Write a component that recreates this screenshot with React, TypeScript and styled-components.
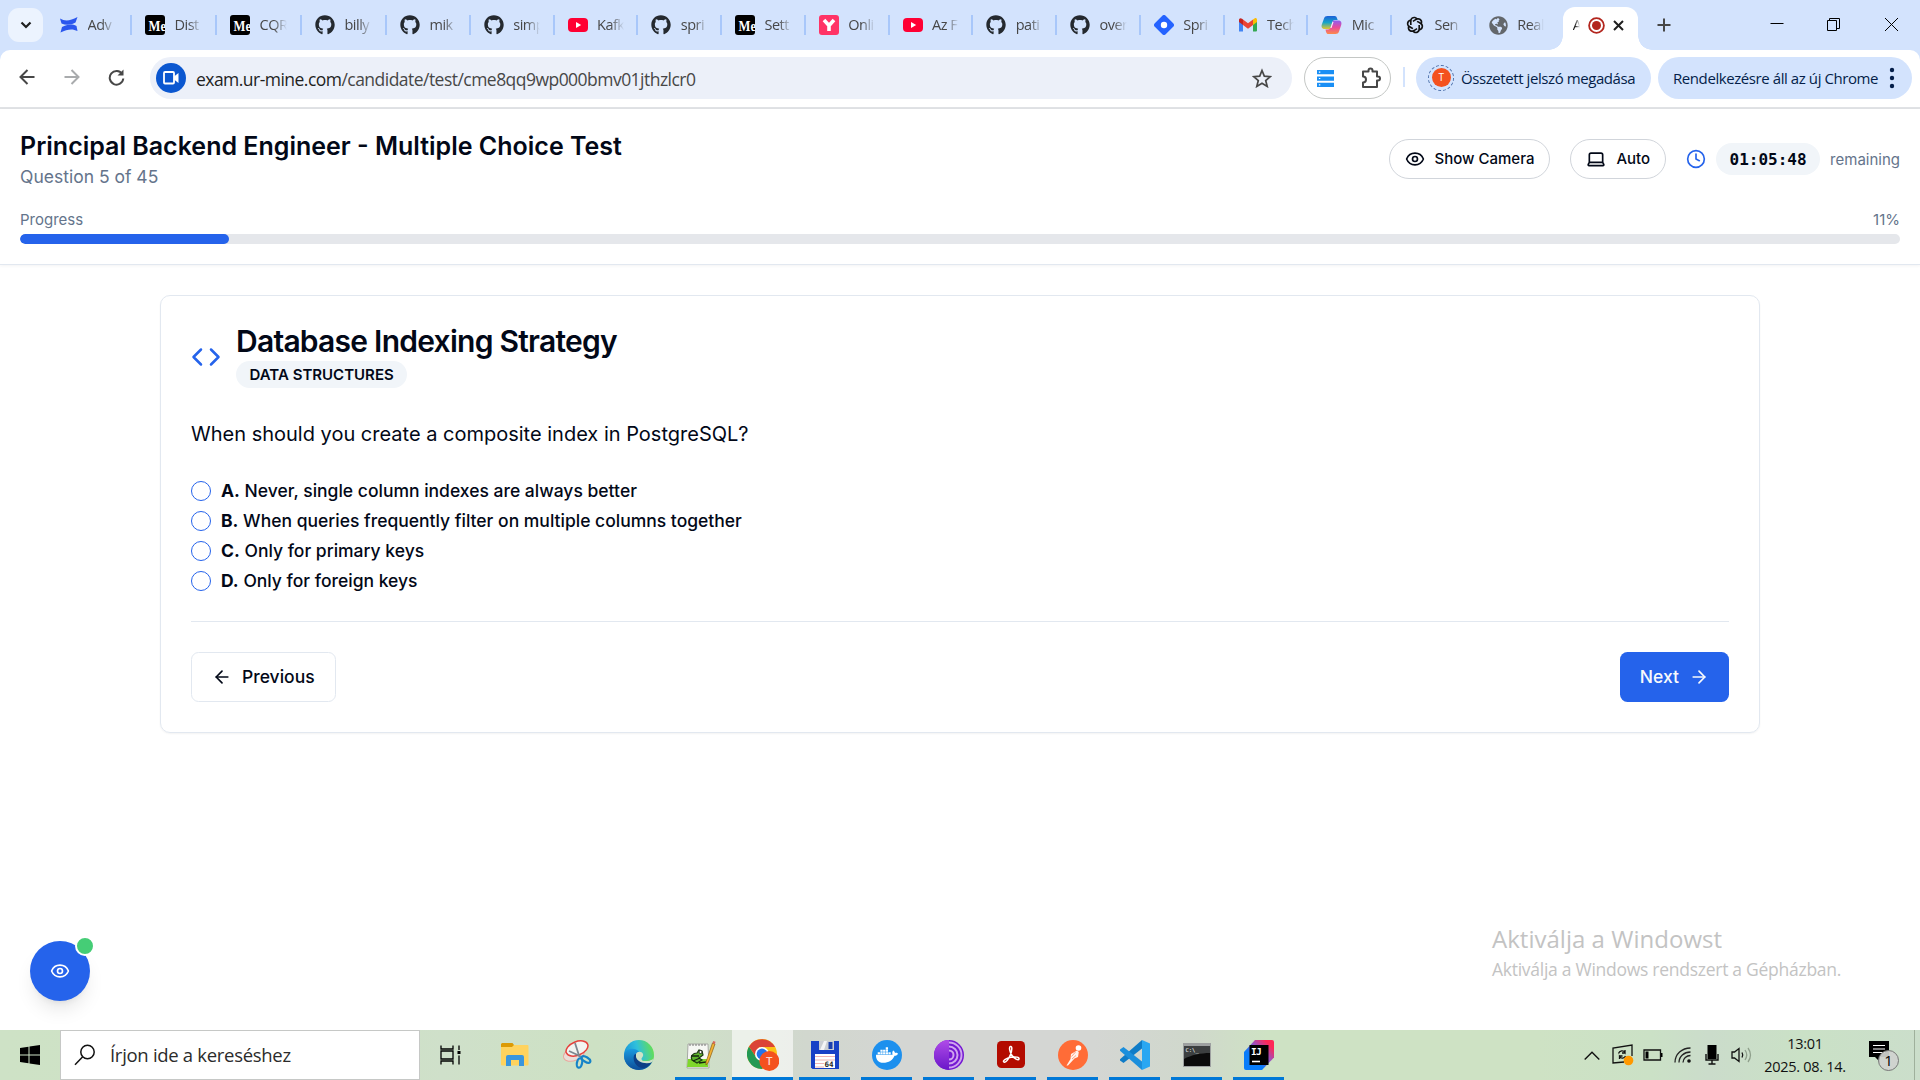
import React from "react";
import styled, { createGlobalStyle, css } from "styled-components";
import { ArrowLeft, ArrowRight, Clock, Code, Eye } from "lucide-react";
import { FaDocker, FaGithub, FaGlobeAmericas } from "react-icons/fa";
import { RiOpenaiLine } from "react-icons/ri";

const Global = createGlobalStyle`
  *, *::before, *::after { box-sizing: border-box; }
  body { margin: 0; background: #fff; overflow: hidden; }
  svg { display: block; flex: none; }
`;

const ui = css`
  font-family: "Open Sans", "Noto Sans", sans-serif;
`;

const Screen = styled.div`
  width: 1920px;
  height: 1080px;
  display: flex;
  flex-direction: column;
  overflow: hidden;
  background: #fff;
  font-family: Inter, sans-serif;
  color: #020817;
`;

/* ---------- Browser ---------- */

const Browser = styled.div`
  ${ui}
  flex: none;
  background: #d3e3fd;
`;

const TabStrip = styled.div`
  display: flex;
  height: 50px;
  align-items: center;
  padding-left: 8px;
`;

const TabSearch = styled.div`
  width: 35px;
  height: 34px;
  margin-right: 4px;
  border-radius: 11px;
  background: #ecf3fe;
  display: flex;
  align-items: center;
  justify-content: center;
`;

const TabItem = styled.div<{ $w: number; $last?: boolean }>`
  width: ${(p) => p.$w}px;
  height: 20px;
  flex: none;
  display: flex;
  align-items: center;
  padding-left: 13px;
  gap: 9.5px;
  border-right: ${(p) => (p.$last ? "none" : "2px solid #a8c7fa")};
`;

const TabText = styled.span`
  width: 27px;
  overflow: hidden;
  white-space: nowrap;
  font-size: 14.5px;
  line-height: 20px;
  letter-spacing: -0.5px;
  color: #474747;
  mask-image: linear-gradient(90deg, #000 50%, transparent 100%);
`;

const ActiveTab = styled.div`
  position: relative;
  width: 75px;
  height: 43px;
  align-self: flex-end;
  border-radius: 12px 12px 0 0;
  background: #fff;
  display: flex;
  align-items: center;
  justify-content: space-between;
  padding: 0 14px 7px 10px;
  &::before,
  &::after {
    content: "";
    position: absolute;
    bottom: 0;
    width: 14px;
    height: 14px;
  }
  &::before {
    left: -14px;
    background: radial-gradient(circle at 0 0, transparent 13.5px, #fff 14px);
  }
  &::after {
    right: -14px;
    background: radial-gradient(circle at 100% 0, transparent 13.5px, #fff 14px);
  }
`;

const ActiveText = styled.span`
  width: 7px;
  overflow: hidden;
  font-size: 14.5px;
  line-height: 20px;
  color: #1f1f1f;
  mask-image: linear-gradient(90deg, #000 30%, transparent 100%);
`;

const NewTab = styled.div`
  width: 52px;
  display: flex;
  justify-content: center;
`;

const WindowButtons = styled.div`
  display: flex;
  margin-left: auto;
  height: 50px;
  padding-right: 1px;
  svg {
    margin: 14px 18.5px 0;
  }
`;

const Toolbar = styled.div`
  height: 59px;
  display: flex;
  align-items: center;
  padding: 0 8px 3px 4px;
  border-bottom: 2px solid #e0e2e5;
  border-radius: 10px 10px 0 0;
  background: #fff;
`;

const NavButton = styled.div`
  width: 45px;
  display: flex;
  justify-content: center;
`;

const Omnibox = styled.div`
  width: 1142px;
  height: 42px;
  margin: 2px 12px 0 11px;
  border-radius: 21px;
  background: #ecf0f9;
  display: flex;
  align-items: center;
  padding: 0 20px 0 6px;
`;

const CameraDot = styled.div`
  width: 30px;
  height: 30px;
  border-radius: 50%;
  background: #0b57d0;
  display: flex;
  align-items: center;
  justify-content: center;
  margin-right: 10px;
`;

const Address = styled.div`
  flex: 1;
  padding-top: 2px;
  font-size: 17.5px;
  line-height: 24px;
  letter-spacing: -0.53px;
  color: #474747;
  b {
    font-weight: 400;
    color: #1f1f1f;
  }
`;

const Extensions = styled.div`
  width: 87px;
  height: 42px;
  margin-top: 2px;
  border: 1px solid #c4c7c5;
  border-radius: 21px;
  display: flex;
  align-items: center;
  justify-content: space-between;
  padding: 0 8px 0 12px;
`;

const ToolbarRule = styled.div`
  width: 2px;
  height: 20px;
  margin: 0 11px 0 12px;
  background: #d3e3fd;
`;

const Chip = styled.div<{ $w: number }>`
  width: ${(p) => p.$w}px;
  height: 42px;
  margin: 1px 7px 0 0;
  border-radius: 21px;
  background: #d3e3fd;
  color: #041e49;
  display: flex;
  align-items: center;
  font-size: 15px;
  line-height: 20px;
  letter-spacing: -0.42px;
  white-space: nowrap;
  padding-left: ${(p) => (p.$w > 240 ? 15 : 12)}px;
  gap: 7px;
  &:last-child {
    margin-right: 0;
  }
  svg:last-child {
    margin-left: auto;
    margin-right: 17px;
  }
`;

const Avatar = styled.div`
  width: 26px;
  height: 26px;
  border-radius: 50%;
  border: 1.5px dashed #4a6ea9;
  display: flex;
  align-items: center;
  justify-content: center;
  span {
    width: 19px;
    height: 19px;
    border-radius: 50%;
    background: #f4511e;
    color: #fff;
    font-size: 10px;
    line-height: 19px;
    text-align: center;
  }
`;

/* ---------- Exam page ---------- */

const Page = styled.div`
  flex: 1;
  min-height: 0;
  position: relative;
`;

const ExamHeader = styled.header`
  padding: 20px;
  border-bottom: 1px solid #e2e8f0;
  box-shadow: 0 1px 3px rgba(15, 23, 42, 0.05);
`;

const HeaderRow = styled.div`
  display: flex;
  justify-content: space-between;
  align-items: center;
  height: 60px;
  margin-bottom: 20px;
`;

const ExamTitle = styled.h1`
  margin: 0;
  font-size: 25px;
  line-height: 35px;
  font-weight: 600;
`;

const Muted = styled.div<{ $size?: number }>`
  font-size: ${(p) => p.$size ?? 15}px;
  line-height: ${(p) => (p.$size ? 25 : 21)}px;
  color: #64748b;
`;

const HeaderTools = styled.div`
  display: flex;
  align-items: center;
  gap: 20px;
`;

const PillButton = styled.button`
  height: 40px;
  padding: 0 15px;
  display: flex;
  align-items: center;
  gap: 10px;
  border: 1px solid #d1d5db;
  border-radius: 20px;
  background: #fff;
  font: 500 15px/20px Inter, sans-serif;
  color: #020817;
`;

const Timer = styled.div`
  display: flex;
  align-items: center;
  gap: 10px;
`;

const TimeBadge = styled.div`
  width: 104px;
  height: 32px;
  border-radius: 16px;
  background: #f1f5f9;
  text-align: center;
  font: 700 16px/33px "DejaVu Sans Mono", monospace;
`;

const ProgressLabels = styled.div`
  display: flex;
  justify-content: space-between;
  margin-bottom: 4px;
`;

const Track = styled.div`
  height: 10px;
  border-radius: 5px;
  background: #e5e7eb;
  overflow: hidden;
`;

const Fill = styled.div`
  width: 209px;
  height: 10px;
  border-radius: 5px;
  background: #2563eb;
`;

const Card = styled.main`
  width: 1600px;
  margin: 30px auto 0;
  padding: 30px;
  border: 1px solid #e2e8f0;
  border-radius: 10px;
  box-shadow: 0 1px 2px rgba(0, 0, 0, 0.05);
`;

const CardHead = styled.div`
  display: flex;
  align-items: center;
  gap: 15px;
`;

const CardTitle = styled.h2`
  margin: 0 0 5px;
  font-size: 30px;
  line-height: 30px;
  font-weight: 600;
  letter-spacing: -0.75px;
`;

const Category = styled.div`
  display: inline-block;
  height: 27px;
  padding: 0 13.5px;
  border-radius: 14px;
  background: #f1f5f9;
  font-size: 15px;
  line-height: 27px;
  font-weight: 600;
  vertical-align: top;
`;

const Question = styled.p`
  margin: 30px 0;
  font-size: 20px;
  line-height: 32.5px;
`;

const Options = styled.div`
  display: grid;
  gap: 10px;
`;

const Option = styled.label`
  display: flex;
  align-items: center;
  gap: 10px;
  height: 20px;
  font-size: 17.5px;
  line-height: 20px;
  font-weight: 500;
  b {
    font-weight: 700;
  }
`;

const Radio = styled.i`
  width: 20px;
  height: 20px;
  border: 1px solid #2563eb;
  border-radius: 50%;
`;

const CardFoot = styled.div`
  display: flex;
  justify-content: space-between;
  margin-top: 30px;
  padding-top: 30px;
  border-top: 1px solid #e2e8f0;
`;

const ActionButton = styled.button<{ $primary?: boolean }>`
  height: 50px;
  padding: 0 20px;
  display: flex;
  align-items: center;
  gap: 10px;
  border-radius: 7.5px;
  border: ${(p) => (p.$primary ? "none" : "1px solid #e2e8f0")};
  background: ${(p) => (p.$primary ? "#2563eb" : "#fff")};
  color: ${(p) => (p.$primary ? "#f8fafc" : "#020817")};
  font: 500 17.5px/25px Inter, sans-serif;
`;

const CameraFab = styled.div`
  position: absolute;
  left: 30px;
  bottom: 29px;
  width: 60px;
  height: 60px;
  border-radius: 50%;
  background: #2563eb;
  color: #fff;
  display: flex;
  align-items: center;
  justify-content: center;
  box-shadow: 0 12px 19px -4px rgba(0, 0, 0, 0.1), 0 5px 7px -5px rgba(0, 0, 0, 0.1);
  &::after {
    content: "";
    position: absolute;
    top: -5px;
    right: -5px;
    width: 20px;
    height: 20px;
    border-radius: 50%;
    border: 2px solid #fff;
    background: #45cd76;
  }
`;

const Watermark = styled.div`
  ${ui}
  position: absolute;
  left: 1492px;
  bottom: 47px;
  color: #c3c3c3;
  white-space: nowrap;
  div:first-child {
    font-size: 24px;
    line-height: 32px;
    letter-spacing: 0.02px;
  }
  div:last-child {
    font-size: 17.5px;
    line-height: 28px;
    letter-spacing: -0.27px;
  }
`;

/* ---------- Taskbar ---------- */

const Taskbar = styled.div`
  ${ui}
  height: 50px;
  flex: none;
  display: flex;
  color: #111;
  background: linear-gradient(
    90deg,
    #cee2c6 0%, #cde2c4 17%, #cfe0ca 23%, #cde1c4 31%, #cfe0c8 36%, #d1d7ce 42%,
    #d4d6d3 47%, #d4d6d3 57%, #d0d8cc 62%, #cee2c4 66%, #cee2c4 80%, #cbe1c6 86%, #cbdccb 89%, #cae1c6 94%, #cbdecb 100%
  );
`;

const Start = styled.div`
  width: 60px;
  display: flex;
  align-items: center;
  justify-content: center;
`;

const SearchBox = styled.div`
  width: 360px;
  height: 50px;
  margin-right: 1px;
  border: 1px solid #c6c8c6;
  background: #fff;
  display: flex;
  align-items: center;
  padding: 0 0 1px 13px;
  gap: 14px;
  font-size: 18.5px;
  letter-spacing: -0.3px;
  color: #2b2b2b;
`;

const TaskItem = styled.div<{ $open?: boolean; $active?: boolean }>`
  width: 62px;
  height: 50px;
  display: flex;
  align-items: center;
  justify-content: center;
  border-left: 1px solid transparent;
  background: ${(p) => (p.$active ? "rgba(255,255,255,.6)" : "transparent")};
  background-clip: padding-box;
  box-shadow: ${(p) => (p.$active ? "inset 0 -3px #0078d7" : "none")};
  ${(p) =>
    p.$open &&
    css`
      background: linear-gradient(#0078d7, #0078d7) center bottom / 51px 3px no-repeat;
    `}
`;

const Tray = styled.div`
  margin-left: auto;
  display: flex;
  align-items: center;
`;

const TrayCell = styled.div<{ $w: number }>`
  width: ${(p) => p.$w}px;
  display: flex;
  justify-content: center;
`;

const ClockText = styled.div`
  width: 96px;
  text-align: center;
  font-size: 14.5px;
  line-height: 23px;
  letter-spacing: -0.3px;
  white-space: nowrap;
`;

const ShowDesktop = styled.div`
  width: 6px;
  height: 50px;
  border-left: 1px solid #9fb09c;
`;

/* ---------- Drawn icons ---------- */

const ConfluenceIcon = () => (
  <svg width="18" height="18" viewBox="0 0 18 18">
    <path d="M0 2.500c5 3 10 2.500 17.500-1.500l-2 5.500C11 9 6 9.500 1.500 7.500z" fill="#2b57ee" />
    <path d="M17.500 15c-5-2.500-10-2-17 1.500l1.500-5.500c5-2.500 9.500-3.500 14.500-1z" fill="#2b57ee" />
  </svg>
);

const MediumIcon = () => (
  <svg width="20" height="20" viewBox="0 0 20 20">
    <rect width="20" height="20" rx="3" />
    <text x="3.500" y="15.500" fontFamily="Liberation Serif, serif" fontWeight="700" fontSize="15.500" fill="#fff" textLength="17.500" lengthAdjust="spacingAndGlyphs">Me</text>
  </svg>
);

const YoutubeIcon = () => (
  <svg width="20" height="20" viewBox="0 0 20 20">
    <rect y="3" width="20" height="14" rx="4" fill="#ff0033" />
    <path d="M8 7v6l5.200-3z" fill="#fff" />
  </svg>
);

const YIcon = () => (
  <svg width="20" height="20" viewBox="0 0 20 20">
    <rect width="20" height="20" rx="3" fill="#ff3366" />
    <path d="M5 5 10 10.500l5-5.500M10 10v6" fill="none" stroke="#fff" strokeWidth="3.600" />
  </svg>
);

const DiamondIcon = () => (
  <svg width="20" height="20" viewBox="0 0 20 20">
    <path d="M8.300.8a2.400 2.400 0 0 1 3.400 0l7.500 7.500a2.400 2.400 0 0 1 0 3.400l-7.500 7.500a2.400 2.400 0 0 1-3.400 0L.8 11.700a2.400 2.400 0 0 1 0-3.400z" fill="#2563ff" />
    <circle cx="10" cy="10" r="3.200" fill="#fff" />
  </svg>
);

const GmailIcon = () => (
  <svg width="20" height="20" viewBox="0 0 20 20">
    <path d="M1 6v10.500h4V9z" fill="#4285f4" />
    <path d="M15 9v7.500h3a1 1 0 0 0 1-1V6z" fill="#34a853" />
    <path d="m15 4.500 1.500-1C18 2.500 19 3.500 19 5v2l-4 3z" fill="#fbbc04" />
    <path d="M5 4.500 10 8.300l5-3.800V10l-5 3.800L5 10z" fill="#ea4335" />
    <path d="M1 5c0-1.500 1.500-2.500 3-1.200l1 .7V10L1 7z" fill="#c5221f" />
  </svg>
);

const CopilotIcon = () => (
  <svg width="21" height="20" viewBox="0 0 21 20">
    <defs>
      <linearGradient id="cpa" x2="0" y2="1"><stop stopColor="#1b5fd9" /><stop offset=".5" stopColor="#15a4c9" /><stop offset="1" stopColor="#e3c52d" /></linearGradient>
      <linearGradient id="cpb" x2="0" y2="1"><stop stopColor="#8d5ff0" /><stop offset=".5" stopColor="#e84a9c" /><stop offset="1" stopColor="#fd8b4a" /></linearGradient>
    </defs>
    <path d="M6.500 1h7c1.500 0 2 .8 2.500 2.300L16.700 5H14c-1.600 0-2.300 1-2.800 2.500L9 14H4C1 14 0 12 .8 9.500L3 3.500C3.700 1.700 4.700 1 6.500 1z" fill="url(#cpa)" />
    <path d="M14.500 19h-7C6 19 5.500 18.200 5 16.700L4.500 14.500H7c1.600 0 2.300-1 2.800-2.500L12 5.500h5c3 0 4 2 3.200 4.500l-2.200 6.500c-.7 1.800-1.700 2.500-3.500 2.500z" fill="url(#cpb)" />
    <path d="m9.500 13 2-6h1l-2 6z" fill="#fff" />
  </svg>
);

const Laptop = () => (
  <svg width="20" height="20" viewBox="0 0 24 24" fill="none" stroke="currentColor" strokeWidth="2" strokeLinecap="round" strokeLinejoin="round">
    <path d="M20 16V7a2 2 0 0 0-2-2H6a2 2 0 0 0-2 2v9m16 0H4m16 0 1.280 2.550a1 1 0 0 1-.9 1.450H3.620a1 1 0 0 1-.9-1.450L4 16" />
  </svg>
);

const Explorer = () => (
  <svg width="28" height="24" viewBox="0 0 28 24">
    <path d="M1 0h10.500l1.500 2v4H0V1z" fill="#dc9a05" />
    <path d="M0 4h11l2-2h13.500a1 1 0 0 1 1 1v18.500a1 1 0 0 1-1 1H1a1 1 0 0 1-1-1z" fill="#ffd35e" />
    <path d="M5 23V14a2 2 0 0 1 2-2h14a2 2 0 0 1 2 2v9h-5v-6h-8v6z" fill="#3a96dd" />
  </svg>
);

const Snip = () => (
  <svg width="30" height="30" viewBox="0 0 30 30" fill="none">
    <ellipse cx="12" cy="14" rx="11" ry="6.500" transform="rotate(-22 12 14)" fill="#e9ded9" stroke="#eba79d" />
    <ellipse cx="15" cy="8.500" rx="11.500" ry="6.800" transform="rotate(-22 15 8.500)" fill="#f2f4f1" stroke="#e5413c" strokeWidth="1.500" />
    <path d="m13 3 4.500 14M7 11l13 6" stroke="#7d8790" strokeWidth="1.800" />
    <ellipse cx="17.500" cy="23" rx="2.600" ry="4.800" transform="rotate(12 17.500 23)" stroke="#1583c8" strokeWidth="2.200" />
    <ellipse cx="24" cy="19.500" rx="2.400" ry="4.800" transform="rotate(-58 24 19.500)" stroke="#1583c8" strokeWidth="2.200" />
  </svg>
);

const Edge = () => (
  <svg width="30" height="30" viewBox="0 0 30 30">
    <defs>
      <linearGradient id="e1" x1="0" y1=".6" x2="1" y2=".3"><stop stopColor="#1590d8" /><stop offset=".5" stopColor="#2fc0dc" /><stop offset="1" stopColor="#66e04e" /></linearGradient>
      <linearGradient id="e2" x2="0" y2="1"><stop stopColor="#1a9be0" /><stop offset="1" stopColor="#0c4c98" /></linearGradient>
    </defs>
    <circle cx="15" cy="15" r="15" fill="url(#e1)" />
    <path d="M0 16C0 9 8 7.500 12 9.500c4 2 5 5 3.500 7-2 2.500 2 5.500 7 4.500 3-.5 5.500-2 6 0C26 27 20 30 15 30 7 30 0 24 0 16z" fill="url(#e2)" />
    <path d="M10 15.500C8 22 14 29 20 28c4-1 7-4 8-6.500-6 3-13 1.500-14.500-3-.8-2.500 0-4 .8-5-2 0-3.600.5-4.300 2z" fill="#0d3f86" />
    <path d="M12 14c1-3 6-3 7 0 .8 2.500-1.500 3.500-1.500 5 0 2.500 5 3 11.800 0l-.8 3C22 25 13 22 12 17z" fill="#cfe2c6" />
    <path d="M18 20c2 1.500 8 1 10.500-1 1.200-2 1.500-3 1.500-4-2 4-6 5.500-10 5.200z" fill="#62dc5c" />
  </svg>
);

const NotepadPP = () => (
  <svg width="30" height="30" viewBox="0 0 30 30">
    <path d="M2 4h20l1 24H1z" fill="#f6f7f4" stroke="#a7a9a4" />
    <path d="M2 19h20v8H1z" fill="#7fd72c" />
    <path d="M4 4v2M7 4v2M10 4v2M13 4v2M16 4v2M19 4v2" stroke="#777" />
    <path d="M6 20c-2-4 1-7 5-7l2-3 3 1 1 4-4 3 3 2-5 3z" fill="#5eb52c" stroke="#1d3b12" strokeWidth="1.200" />
    <circle cx="14.500" cy="12" r="1.600" fill="#fff" stroke="#222" />
    <path d="M5 16h8M7 21l7-3M13 23l7-1" stroke="#16260f" strokeWidth="1.300" />
    <path d="m20 22 6.500-19 2.500 1-6.500 18-2.500 3z" fill="#f3b334" stroke="#8b5c16" strokeWidth=".7" />
    <path d="m26.500 3 .7-2 2.300.8-.6 2.200z" fill="#d9665c" />
  </svg>
);

const Chrome = () => (
  <svg width="32" height="32" viewBox="0 0 32 32">
    <circle cx="15" cy="15" r="15" fill="#fbc116" />
    <path d="M2 7.500A15 15 0 0 0 15 30l6.500-11.200L9 18z" fill="#229954" />
    <path d="M2 7.500 8.500 17 12 8h16A15 15 0 0 0 2 7.500z" fill="#db4437" />
    <circle cx="15" cy="15" r="7" fill="#fff" />
    <circle cx="15" cy="15" r="5.400" fill="#2374e8" />
    <circle cx="22.300" cy="22" r="10" fill="#f4511e" />
    <text x="22.300" y="26" textAnchor="middle" fontFamily="Open Sans, sans-serif" fontWeight="600" fontSize="11.500" fill="#ffd8c8">T</text>
  </svg>
);

const Floppy = () => (
  <svg width="28" height="28" viewBox="0 0 28 28">
    <path d="M0 0h28v28H1.500L0 26.500z" fill="#1741c6" />
    <path d="M8 0h15v9H8z" fill="#c9cdd3" />
    <path d="m13 0 3 0-3 9h-4z" fill="#f3f4f6" />
    <path d="M17.500 1h4v7h-4z" fill="#1b3fae" />
    <path d="M4 13h20v14H4z" fill="#fff" />
    <path d="M4 15.500h20M4 19h20M4 22.500h9M4 26h9" stroke="#f0b3b3" strokeWidth="1.200" />
    <text x="13.500" y="26" fontFamily="DejaVu Sans Mono, monospace" fontWeight="700" fontSize="7.500" fill="#222">64</text>
  </svg>
);

const Docker = () => (
  <svg width="30" height="30" viewBox="0 0 30 30">
    <circle cx="15" cy="15" r="15" fill="#1d90ee" />
    <FaDocker x="4" y="4" width="22" height="22" size={22} color="#fff" />
  </svg>
);

const Tor = () => (
  <svg width="30" height="30" viewBox="0 0 30 30">
    <defs>
      <linearGradient id="tor" x2="0" y2="1"><stop stopColor="#b04be8" /><stop offset="1" stopColor="#6a17c9" /></linearGradient>
    </defs>
    <circle cx="15" cy="15" r="15" fill="#7418d2" />
    <path d="M15 2.500a12.500 12.500 0 0 1 0 25M15 6.500a8.500 8.500 0 0 1 0 17M15 10.500a4.500 4.500 0 0 1 0 9" fill="none" stroke="#cfa4ef" strokeWidth="2" />
    <path d="M15 0a15 15 0 0 0 0 30z" fill="url(#tor)" />
  </svg>
);

const Acrobat = () => (
  <svg width="28" height="28" viewBox="0 0 28 28">
    <rect width="28" height="27" rx="4.500" fill="#b30b00" />
    <path d="M13.500 5.500c2-.5 1.500 4 0 8-1.500 4-4.500 8.500-6.500 7.500s2-4 7-4.800c5-.8 8.500 0 8 1.800s-5-.5-7-3.500-3.500-8.500-1.500-9z" fill="none" stroke="#fff" strokeWidth="1.500" />
  </svg>
);

const Postman = () => (
  <svg width="30" height="30" viewBox="0 0 30 30">
    <circle cx="15" cy="15" r="15" fill="#ff6c37" />
    <circle cx="20.500" cy="8" r="2.800" fill="#fff" />
    <path d="m19 10.500 1.800 1.500-.8 5-3.500 1.500-6.500 7h-1.500l4-6.500.5-5z" fill="#fff3ec" />
    <path d="m17.500 12-4 4.500m4.500-1-4 3.500" stroke="#ff8d63" strokeWidth=".8" />
  </svg>
);

const VSCode = () => (
  <svg width="30" height="30" viewBox="0 0 30 30">
    <path d="M22 0 30 3.500v23L22 30z" fill="#2aa7f2" />
    <path d="M22 0v8.500L3.500 23 0 20.500v-1.200z" fill="#0f7cc7" />
    <path d="M22 30v-8.500L3.500 7 0 9.500v1.200z" fill="#1b8fdc" />
  </svg>
);

const Cmd = () => (
  <svg width="28" height="24" viewBox="0 0 28 24">
    <rect width="28" height="24" fill="#9da0a0" />
    <rect x="1" y="3" width="26" height="20" fill="#0b0b0b" />
    <path d="M1 3h26v7C18 10 8 12 1 16z" fill="#3c3f40" />
    <text x="2.500" y="9" fontFamily="DejaVu Sans Mono, monospace" fontSize="5.500" fill="#fff">C:\_</text>
  </svg>
);

const Idea = () => (
  <svg width="30" height="30" viewBox="0 0 30 30">
    <defs>
      <linearGradient id="ij" x1="0" y1="1" x2="1" y2="0"><stop offset=".35" stopColor="#087cfa" /><stop offset=".6" stopColor="#9a4fc0" /><stop offset=".85" stopColor="#fe2857" /></linearGradient>
    </defs>
    <path d="M11 0h17a2 2 0 0 1 2 2v15.500L18 30H2a2 2 0 0 1-2-2V12z" fill="url(#ij)" />
    <rect x="5.500" y="5" width="19" height="20" />
    <text x="7" y="15" fontFamily="DejaVu Sans Mono, monospace" fontWeight="700" fontSize="9.500" fill="#fff" letterSpacing="-.6">IJ</text>
    <path d="M8 21.500h8" stroke="#fff" strokeWidth="1.600" />
  </svg>
);

const TaskView = () => (
  <svg width="25" height="20" viewBox="0 0 25 20" fill="none" stroke="#000" strokeWidth="1.300">
    <path d="M1 .5v3.500h12V.5M1 19.500v-3.500h12v3.500M1 6h12v8H1zM19 .5V5M19 10.500v9" />
    <path d="M17.500 6h3v3h-3z" fill="#000" stroke="none" />
  </svg>
);

const github = <FaGithub size={20} color="#24292f" />;
const tabs: [React.ReactNode, string][] = [
  [<ConfluenceIcon />, "Adv"],
  [<MediumIcon />, "Dist"],
  [<MediumIcon />, "CQR"],
  [github, "billy"],
  [github, "mik"],
  [github, "simp"],
  [<YoutubeIcon />, "Kafk"],
  [github, "spri"],
  [<MediumIcon />, "Sett"],
  [<YIcon />, "Onli"],
  [<YoutubeIcon />, "Az F"],
  [github, "pati"],
  [github, "over"],
  [<DiamondIcon />, "Spri"],
  [<GmailIcon />, "Tech"],
  [<CopilotIcon />, "Mic"],
  [<RiOpenaiLine size={20} color="#111" />, "Sen"],
  [<FaGlobeAmericas size={19} color="#63676b" />, "Real"],
];

const tasks: [React.ReactNode, string][] = [
  [<TaskView />, ""],
  [<Explorer />, ""],
  [<Snip />, ""],
  [<Edge />, ""],
  [<NotepadPP />, "open"],
  [<Chrome />, "active"],
  [<Floppy />, "open"],
  [<Docker />, "open"],
  [<Tor />, "open"],
  [<Acrobat />, "open"],
  [<Postman />, "open"],
  [<VSCode />, "open"],
  [<Cmd />, "open"],
  [<Idea />, "open"],
];

const options = [
  ["A.", "Never, single column indexes are always better"],
  ["B.", "When queries frequently filter on multiple columns together"],
  ["C.", "Only for primary keys"],
  ["D.", "Only for foreign keys"],
];

const line = { fill: "none", stroke: "#474747", strokeWidth: 2 } as const;

function BrowserChrome() {
  return (
    <Browser>
      <TabStrip>
        <TabSearch>
          <svg width="12" height="8" viewBox="0 0 12 8"><path d="m1.500 1.500 4.500 4.500 4.500-4.500" fill="none" stroke="#1f1f1f" strokeWidth="2.200" /></svg>
        </TabSearch>
        {tabs.map(([icon, name], i) => (
          <TabItem key={i} $w={i < 4 ? 85 : i === 17 ? 87 : 83.75} $last={i === 17}>
            {icon}
            <TabText>{name}</TabText>
          </TabItem>
        ))}
        <ActiveTab>
          <ActiveText>A</ActiveText>
          <svg width="17" height="17" viewBox="0 0 17 17"><circle cx="8.500" cy="8.500" r="7.400" fill="none" stroke="#b3261e" strokeWidth="1.800" /><circle cx="8.500" cy="8.500" r="4.500" fill="#b3261e" /></svg>
          <svg width="11" height="11" viewBox="0 0 11 11"><path d="m1 1 9 9M10 1l-9 9" stroke="#1f1f1f" strokeWidth="2" /></svg>
        </ActiveTab>
        <NewTab>
          <svg width="14" height="14" viewBox="0 0 14 14"><path d="M7 .5v13M.5 7h13" {...line} /></svg>
        </NewTab>
        <WindowButtons>
          <svg width="20" height="20" viewBox="0 0 20 20"><path d="M3.500 9.500h13" stroke="#000" /></svg>
          <svg width="20" height="20" viewBox="1 0 20 20" fill="none" stroke="#000"><path d="M4.500 6.500h9v10h-9zM6.500 6.500v-2h10v10h-3" /></svg>
          <svg width="20" height="20" viewBox="0 0 20 20"><path d="m4 4 13 13M17 4 4 17" stroke="#000" /></svg>
        </WindowButtons>
      </TabStrip>
      <Toolbar>
        <NavButton><svg width="16" height="16" viewBox="0 0 16 16"><path d="M15.500 8H2M8.500 1 1.500 8l7 7" {...line} /></svg></NavButton>
        <NavButton><svg width="16" height="16" viewBox="0 0 16 16"><path d="M.5 8H14M7.500 1l7 7-7 7" {...line} stroke="#a9abad" /></svg></NavButton>
        <NavButton><svg width="17" height="17" viewBox="0 0 17 17"><path d="M14.300 5.200A6.800 6.800 0 1 0 15.300 9.500" {...line} /><path d="M15.500.5v6h-6z" fill="#474747" /></svg></NavButton>
        <Omnibox>
          <CameraDot>
            <svg width="16" height="14" viewBox="0 0 16 14"><rect x="1" y="1" width="10" height="11.500" rx="1" fill="none" stroke="#fff" strokeWidth="1.800" /><path d="M11 5.500 15.500 2v10L11 8.500z" fill="#fff" /></svg>
          </CameraDot>
          <Address><b>exam.ur-mine.com</b>/candidate/test/cme8qq9wp000bmv01jthzlcr0</Address>
          <svg width="20" height="20" viewBox="0 0 20 20"><path d="m10 2.500 2.300 5.600 6 .5-4.600 3.900 1.500 5.900L10 15.200l-5.200 3.200 1.500-5.900L1.700 8.600l6-.5z" fill="none" stroke="#474747" strokeWidth="1.700" /></svg>
        </Omnibox>
        <Extensions>
          <svg width="17" height="17" viewBox="0 0 18 16" preserveAspectRatio="none"><path d="M0 0h18v4H0zM0 6h18v4H0zM0 12h18v4H0z" fill="#1a8ff5" /><path d="M2 2h1.500M2 8h1.500M2 14h1.500" stroke="#fff" /></svg>
          <svg width="22" height="22" viewBox="0 0 22 22"><path d="M3 4.500h5.500v-1a2 2 0 0 1 4 0v1H17v5h1a2 2 0 0 1 0 4h-1V20H3v-4.500c4 0 4-6 0-6z" {...line} strokeLinejoin="round" /></svg>
        </Extensions>
        <ToolbarRule />
        <Chip $w={235}>
          <Avatar><span>T</span></Avatar>
          Összetett jelszó megadása
        </Chip>
        <Chip $w={254}>
          Rendelkezésre áll az új Chrome
          <svg width="6" height="22" viewBox="0 0 6 22" fill="#041e49"><circle cx="3" cy="3" r="2.200" /><circle cx="3" cy="11" r="2.200" /><circle cx="3" cy="19" r="2.200" /></svg>
        </Chip>
      </Toolbar>
    </Browser>
  );
}

export default function App() {
  return (
    <Screen>
      <Global />
      <BrowserChrome />
      <Page>
        <ExamHeader>
          <HeaderRow>
            <div>
              <ExamTitle>Principal Backend Engineer - Multiple Choice Test</ExamTitle>
              <Muted $size={17.5}>Question 5 of 45</Muted>
            </div>
            <HeaderTools>
              <PillButton><Eye size={20} />Show Camera</PillButton>
              <PillButton><Laptop />Auto</PillButton>
              <Timer>
                <Clock size={20} color="#2563eb" />
                <TimeBadge>01:05:48</TimeBadge>
                <Muted>remaining</Muted>
              </Timer>
            </HeaderTools>
          </HeaderRow>
          <ProgressLabels><Muted>Progress</Muted><Muted>11%</Muted></ProgressLabels>
          <Track><Fill /></Track>
        </ExamHeader>
        <Card>
          <CardHead>
            <Code size={30} color="#2563eb" />
            <div>
              <CardTitle>Database Indexing Strategy</CardTitle>
              <Category>DATA STRUCTURES</Category>
            </div>
          </CardHead>
          <Question>When should you create a composite index in PostgreSQL?</Question>
          <Options>
            {options.map(([k, t]) => (
              <Option key={k}><Radio /><span><b>{k}</b> {t}</span></Option>
            ))}
          </Options>
          <CardFoot>
            <ActionButton><ArrowLeft size={20} />Previous</ActionButton>
            <ActionButton $primary>Next<ArrowRight size={20} /></ActionButton>
          </CardFoot>
        </Card>
        <CameraFab><Eye size={20} /></CameraFab>
        <Watermark>
          <div>Aktiválja a Windowst</div>
          <div>Aktiválja a Windows rendszert a Gépházban.</div>
        </Watermark>
      </Page>
      <Taskbar>
        <Start>
          <svg width="20" height="20" viewBox="0 0 20 20"><path d="M0 3l8.500-1.300v7.800H0zM9.500 1.500 20 0v9.500H9.500zM0 10.500h8.500v7.800L0 17zM9.500 10.500H20V20L9.500 18.500z" /></svg>
        </Start>
        <SearchBox>
          <svg width="22" height="22" viewBox="0 0 22 22" fill="none" stroke="#111" strokeWidth="1.500"><circle cx="13.500" cy="8" r="6.700" /><path d="m8.700 12.800-7.700 8" /></svg>
          Írjon ide a kereséshez
        </SearchBox>
        {tasks.map(([icon, state], i) => (
          <TaskItem key={i} $open={state === "open"} $active={state === "active"}>{icon}</TaskItem>
        ))}
        <Tray>
          <TrayCell $w={30}><svg width="16" height="9" viewBox="0 0 16 9"><path d="m.7 8.500 7.300-7.300 7.300 7.300" fill="none" stroke="#111" strokeWidth="1.400" /></svg></TrayCell>
          <TrayCell $w={31}>
            <svg width="22" height="22" viewBox="0 0 22 22" fill="none" stroke="#111" strokeWidth="1.300"><path d="M12 18 1 19V4l19-3v11M6.500 9.500c1-3 5-3.500 6.500-1V6m0 3h-3M13.500 12c-1 2.500-4.500 3-6 .5V15m0-3h3" /><circle cx="16.500" cy="16.500" r="4.800" fill="#ff9800" stroke="none" /></svg>
          </TrayCell>
          <TrayCell $w={30}><svg width="20" height="12" viewBox="0 0 20 12"><path d="M1 1h16.500v10H1z" fill="none" stroke="#111" strokeWidth="1.300" /><path d="M2.500 2.500h3v7h-3zM18 4h1.500v4H18z" /></svg></TrayCell>
          <TrayCell $w={30}>
            <svg width="18" height="18" viewBox="0 0 18 18" fill="none" stroke="#222" strokeWidth="1.300"><path d="M1 16.500C1 8 8 2 16.500 2M5 16.500c0-6 5-10.500 11.500-10.500M9 16.500c0-4 3.500-7 7.500-7" /><circle cx="15" cy="15" r="1.800" fill="#111" stroke="none" /></svg>
          </TrayCell>
          <TrayCell $w={28}><svg width="14" height="20" viewBox="0 0 14 20"><path d="M2.500 0h9v14h-9z" /><path d="M1 9v6h12V9M7 15v4M3.500 19h7" fill="none" stroke="#111" strokeWidth="1.400" /></svg></TrayCell>
          <TrayCell $w={31}>
            <svg width="21" height="18" viewBox="0 0 21 18" fill="none" stroke="#111" strokeWidth="1.300"><path d="M1 6h2.500L8 2.500v13L3.500 12H1zM11 6.500q1.500 2.500 0 5" /><path d="M14 4q3.500 5 0 10M17 2q5 7 0 14" stroke="#8fa08c" /></svg>
          </TrayCell>
          <ClockText>13:01<br />2025. 08. 14.</ClockText>
          <TrayCell $w={61}>
            <svg width="32" height="32" viewBox="0 0 32 32">
              <path d="M1 2h20v16h-9v5l-5-5H1z" />
              <path d="M5 6.500h12M5 10h12M5 13.500h12" stroke="#fff" strokeWidth="1.200" />
              <circle cx="20.500" cy="21.500" r="10" fill="#d0d2d0" fillOpacity=".93" stroke="#777" />
              <text x="20.500" y="27" textAnchor="middle" fontFamily="Open Sans, sans-serif" fontSize="15">1</text>
            </svg>
          </TrayCell>
          <ShowDesktop />
        </Tray>
      </Taskbar>
    </Screen>
  );
}
